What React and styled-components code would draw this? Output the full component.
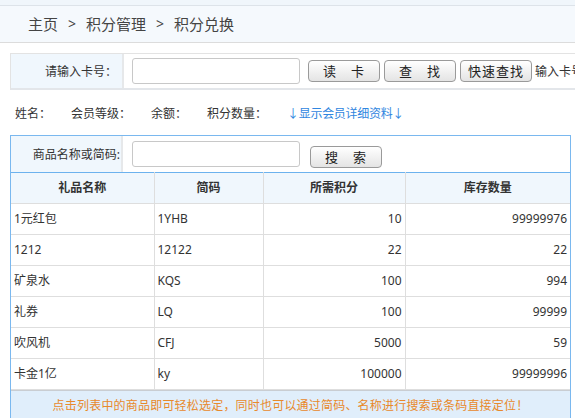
import styled, { createGlobalStyle } from "styled-components";

const GlobalStyle = createGlobalStyle`
  html, body {
    margin: 0;
    padding: 0;
    background: #fff;
    overflow: hidden;
  }
  body {
    font-family: "Noto Sans", "Noto Sans CJK SC", sans-serif;
    font-size: 12px;
    color: #333;
  }
`;

const Page = styled.div`
  width: 575px;
  height: 418px;
  overflow: hidden;
  padding-top: 5px;
  background: #f0f6fb;
  box-sizing: border-box;
`;

const Content = styled.div`
  background: #fff;
  height: 100%;
`;

// 상단 경로 표시
const Breadcrumb = styled.div`
  height: 38px;
  border-top: 1px solid #dde3e9;
  border-bottom: 1px solid #dcdcdc;
  background: #f5f9fd;
  display: flex;
  align-items: center;
  padding: 0 0 1px 28px;
  box-sizing: border-box;
  font-size: 15px;
  color: #444;
`;

const Sep = styled.span`
  margin: 0 10px;
  font-size: 14px;
`;

const CardRow = styled.div`
  display: flex;
  align-items: stretch;
  width: 640px;
  margin: 10px 0 0 10px;
  height: 34px;
  border-top: 1px solid #e3e3e3;
  border-bottom: 2px solid #e3e6ea;
  border-left: 1px solid #e3e3e3;
`;

const LabelCell = styled.div`
  width: ${({ $w }) => $w}px;
  flex: none;
  background: #f0f7fd;
  border-right: 2px solid #e6e8ea;
  display: flex;
  align-items: center;
  justify-content: flex-end;
  padding-right: ${({ $pr }) => $pr || 4}px;
  box-sizing: border-box;
  font-size: 12px;
`;

const FieldCell = styled.div`
  display: flex;
  align-items: center;
  gap: ${({ $gap }) => $gap || 5}px;
  padding-left: ${({ $pl }) => $pl}px;
  white-space: nowrap;
`;

const TextInput = styled.input`
  width: 168px;
  height: 26px;
  box-sizing: border-box;
  border: 1px solid #c8c8c8;
  border-radius: 3px;
  background: #fff;
  margin-right: ${({ $mr }) => $mr}px;
`;

const Button = styled.button`
  width: 72px;
  height: 22px;
  padding: 0;
  border: 1px solid #9a9a9a;
  border-radius: 4px;
  background: linear-gradient(#ffffff, #e4e4e4);
  font-family: "Noto Sans CJK SC", sans-serif;
  font-size: 13px;
  letter-spacing: 1px;
  color: #222;
  line-height: 20px;
  white-space: pre;
  margin-top: ${({ $mt }) => $mt || 0}px;
`;

const Hint = styled.span`
  margin-left: -1px;
  font-size: 12px;
  color: #333;
`;

const InfoRow = styled.div`
  display: flex;
  gap: 20px;
  padding: 0 0 0 15px;
  height: 45px;
  align-items: center;
  font-size: 12px;
`;

const InfoLink = styled.span`
  color: #2f86e0;
  letter-spacing: -0.3px;
`;

const SearchBox = styled.div`
  margin-left: 10px;
  width: 561px;
  border: 1px solid #7ab8ef;
  box-sizing: border-box;
  height: 290px;
`;

const SearchRow = styled.div`
  display: flex;
  height: 36px;
`;

const Table = styled.table`
  width: 100%;
  border-collapse: collapse;
  table-layout: fixed;
  border-top: 1px solid #6cb2ee;
`;

const HeadRow = styled.tr`
  height: 31px;
`;

const BodyRow = styled.tr`
  height: 31px;
`;

const HeadCell = styled.th`
  background: #f0f7fd;
  font-weight: 700;
  font-size: 12px;
  line-height: 14px;
  color: #333;
  text-align: center;
  border-right: 1px solid #dedede;
  border-bottom: 1px solid #dedede;
  padding: 0;
  &:last-child {
    border-right: none;
  }
`;

const DataCell = styled.td`
  padding: 0 3px;
  font-size: 12px;
  line-height: 14px;
  color: #333;
  text-align: ${({ $num }) => ($num ? "right" : "left")};
  border-right: 1px solid #dedede;
  border-bottom: 1px solid #dedede;
  &:last-child {
    border-right: none;
  }
`;

const Footer = styled.div`
  height: 28px;
  border-top: 1px solid #c9cdd2;
  background: #e0eefb;
  display: flex;
  align-items: center;
  justify-content: center;
  padding-bottom: 1px;
  box-sizing: border-box;
  color: #e8892b;
  font-size: 12px;
  letter-spacing: 0.2px;
  font-family: "Noto Sans CJK SC", sans-serif;
`;

const columns = [
  { title: "礼品名称", width: 143 },
  { title: "简码", width: 109 },
  { title: "所需积分", width: 142 },
  { title: "库存数量", width: 165 },
];

const gifts = [
  { name: "1元红包", code: "1YHB", points: 10, stock: 99999976 },
  { name: "1212", code: "12122", points: 22, stock: 22 },
  { name: "矿泉水", code: "KQS", points: 100, stock: 994 },
  { name: "礼券", code: "LQ", points: 100, stock: 99999 },
  { name: "吹风机", code: "CFJ", points: 5000, stock: 59 },
  { name: "卡金1亿", code: "ky", points: 100000, stock: 99999996 },
];

const infoLabels = ["姓名：", "会员等级：", "余额：", "积分数量："];

const App = () => {
  return (
    <>
      <GlobalStyle />
      <Page>
        <Content>
          <Breadcrumb>
            主页<Sep>&gt;</Sep>积分管理<Sep>&gt;</Sep>积分兑换
          </Breadcrumb>

          <CardRow>
            <LabelCell $w={113} $pr={5}>
              请输入卡号：
            </LabelCell>
            <FieldCell $pl={8} $gap={4}>
              <TextInput type="text" $mr={4} />
              <Button>{"读　卡"}</Button>
              <Button>{"查　找"}</Button>
              <Button>快速查找</Button>
              <Hint>输入卡号</Hint>
            </FieldCell>
          </CardRow>

          <InfoRow>
            {infoLabels.map((label) => (
              <span key={label}>{label}</span>
            ))}
            <InfoLink>↓显示会员详细资料↓</InfoLink>
          </InfoRow>

          <SearchBox>
            <SearchRow>
              <LabelCell $w={112} $pr={1}>
                商品名称或简码:
              </LabelCell>
              <FieldCell $pl={9} $gap={0}>
                <TextInput type="text" $mr={5} />
                <Button $mt={6}>{"搜　索"}</Button>
              </FieldCell>
            </SearchRow>
            <Table>
              <colgroup>
                {columns.map((col) => (
                  <col key={col.title} style={{ width: col.width }} />
                ))}
              </colgroup>
              <thead>
                <HeadRow>
                  {columns.map((col) => (
                    <HeadCell key={col.title}>{col.title}</HeadCell>
                  ))}
                </HeadRow>
              </thead>
              <tbody>
                {gifts.map((item) => (
                  <BodyRow key={item.code}>
                    <DataCell>{item.name}</DataCell>
                    <DataCell>{item.code}</DataCell>
                    <DataCell $num>{item.points}</DataCell>
                    <DataCell $num>{item.stock}</DataCell>
                  </BodyRow>
                ))}
              </tbody>
            </Table>
            <Footer>
              点击列表中的商品即可轻松选定，同时也可以通过简码、名称进行搜索或条码直接定位！
            </Footer>
          </SearchBox>
        </Content>
      </Page>
    </>
  );
};

export default App;
